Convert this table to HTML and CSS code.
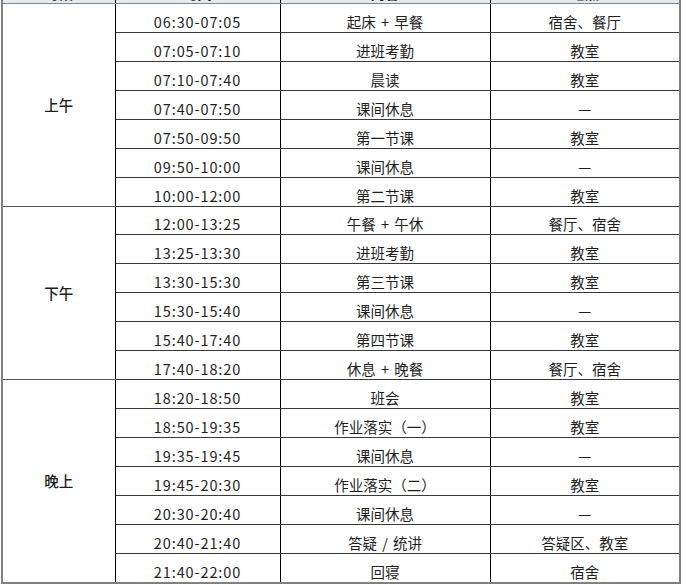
FILE: index.html
```html
<!DOCTYPE html>
<html lang="zh-CN">
<head>
<meta charset="utf-8">
<title>作息时间表</title>
<link rel="stylesheet" href="styles.css">
</head>
<body>
<div class="sheet">
<table class="schedule">
  <colgroup>
    <col class="c-period">
    <col class="c-time">
    <col class="c-content">
    <col class="c-place">
  </colgroup>
  <thead>
    <tr class="head"><th>时段</th><th>时间</th><th>内容</th><th>地点</th></tr>
  </thead>
  <tbody>
    <tr><td class="period" rowspan="7">上午</td><td class="time">06:30-07:05</td><td>起床 <span class="op">+</span> 早餐</td><td>宿舍、餐厅</td></tr>
    <tr><td class="time">07:05-07:10</td><td>进班考勤</td><td>教室</td></tr>
    <tr><td class="time">07:10-07:40</td><td>晨读</td><td>教室</td></tr>
    <tr><td class="time">07:40-07:50</td><td>课间休息</td><td>—</td></tr>
    <tr><td class="time">07:50-09:50</td><td>第一节课</td><td>教室</td></tr>
    <tr><td class="time">09:50-10:00</td><td>课间休息</td><td>—</td></tr>
    <tr><td class="time">10:00-12:00</td><td>第二节课</td><td>教室</td></tr>
    <tr><td class="period" rowspan="6">下午</td><td class="time">12:00-13:25</td><td>午餐 <span class="op">+</span> 午休</td><td>餐厅、宿舍</td></tr>
    <tr><td class="time">13:25-13:30</td><td>进班考勤</td><td>教室</td></tr>
    <tr><td class="time">13:30-15:30</td><td>第三节课</td><td>教室</td></tr>
    <tr><td class="time">15:30-15:40</td><td>课间休息</td><td>—</td></tr>
    <tr><td class="time">15:40-17:40</td><td>第四节课</td><td>教室</td></tr>
    <tr><td class="time">17:40-18:20</td><td>休息 <span class="op">+</span> 晚餐</td><td>餐厅、宿舍</td></tr>
    <tr><td class="period" rowspan="7">晚上</td><td class="time">18:20-18:50</td><td>班会</td><td>教室</td></tr>
    <tr><td class="time">18:50-19:35</td><td>作业落实（一）</td><td>教室</td></tr>
    <tr><td class="time">19:35-19:45</td><td>课间休息</td><td>—</td></tr>
    <tr><td class="time">19:45-20:30</td><td>作业落实（二）</td><td>教室</td></tr>
    <tr><td class="time">20:30-20:40</td><td>课间休息</td><td>—</td></tr>
    <tr><td class="time">20:40-21:40</td><td>答疑 <span class="op">/</span> 统讲</td><td>答疑区、教室</td></tr>
    <tr><td class="time">21:40-22:00</td><td>回寝</td><td>宿舍</td></tr>
  </tbody>
</table>
</div>
</body>
</html>
```

FILE: styles.css
```css
html, body {
  margin: 0;
  padding: 0;
  background: #ffffff;
}

body {
  font-family: "Noto Sans CJK SC", "Noto Sans", sans-serif;
  color: #1e1e1e;
  overflow: hidden;
}

.sheet {
  padding-left: 1px;
  margin-top: -26px;
}

.schedule {
  border-collapse: collapse;
  table-layout: fixed;
  width: 678px;
  border-left: 2px solid #808080;
  border-right: 2px solid #808080;
  border-bottom: 2px solid #808080;
  font-size: 14.5px;
}

.c-period { width: 113px; }
.c-time { width: 165px; }
.c-content { width: 210px; }
.c-place { width: 190px; }

.schedule th,
.schedule td {
  height: 27.95px;
  padding: 0;
  line-height: 20px;
  text-align: center;
  vertical-align: bottom;
  border-left: 1px solid #000;
  border-right: 1px solid #000;
  border-top: 1px solid #3a3a3a;
  border-bottom: 1px solid #3a3a3a;
  white-space: pre;
}

.schedule td.time {
  letter-spacing: 0.9px;
}

.op {
  padding: 0 2px;
}

.head th {
  background: #e4e9ee;
  font-weight: 700;
  border-bottom: 1px solid #7a8896;
}

.schedule td.period {
  vertical-align: middle;
  font-weight: 500;
  border-top: 1px solid #555;
  border-bottom: 1px solid #555;
}

.schedule tbody tr:last-child td {
  border-bottom: 2px solid #808080;
}

.schedule td.period:first-child {
  border-left: 2px solid #808080;
}
```
